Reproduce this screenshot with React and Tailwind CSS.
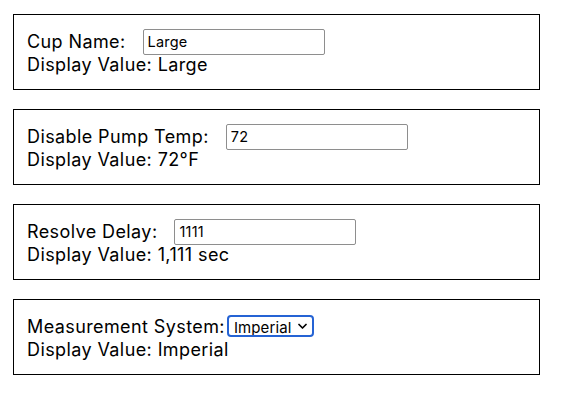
import { useState } from 'react';

function Field({ label, children, display, gap = 'ml-[17px]' }) {
  return (
    <div className="border border-black p-[13px] pr-0">
      <div className="flex items-center h-[26px]">
        <span>{label}</span>
        <div className={gap}>{children}</div>
      </div>
      <div className="leading-[22px]">Display Value: {display}</div>
    </div>
  );
}

export default function App() {
  const [cupName, setCupName] = useState('Large');
  const [temp, setTemp] = useState('72');
  const [delay, setDelay] = useState('1111');
  const [system, setSystem] = useState('Imperial');

  const inputClass =
    'w-[182px] h-[26px] border border-[#8e8e8e] rounded-[2px] px-[4px] text-[14.5px] tracking-[0.2px] text-black outline-none';

  return (
    <div
      className="min-h-[407px] bg-white text-black text-[18px] tracking-[0.4px] pt-[14px] pl-[13px]"
      style={{ fontFamily: 'Inter, "Liberation Sans", Arial, sans-serif' }}
    >
      <div className="w-[527px] flex flex-col gap-[19px]">
        <Field label="Cup Name:" display={cupName}>
          <input className={inputClass} value={cupName} onChange={(e) => setCupName(e.target.value)} />
        </Field>

        <Field label="Disable Pump Temp:" display={`${temp}°F`}>
          <input className={inputClass} value={temp} onChange={(e) => setTemp(e.target.value)} />
        </Field>

        <Field label="Resolve Delay:" display={`${Number(delay).toLocaleString('en-US')} sec`}>
          <input className={inputClass} value={delay} onChange={(e) => setDelay(e.target.value)} />
        </Field>

        <Field label="Measurement System:" display={system} gap="ml-[2px]">
          <div className="relative h-[22px] w-[87px] border-2 border-[#2563d4] rounded-[4px] flex items-center">
            <select
              value={system}
              onChange={(e) => setSystem(e.target.value)}
              className="appearance-none bg-transparent w-full h-full pl-[5px] text-[15px] tracking-[0.1px] text-black outline-none"
            >
              <option>Imperial</option>
              <option>Metric</option>
            </select>
            <svg
              className="absolute right-[5px] top-[6px] pointer-events-none"
              width="9"
              height="7"
              viewBox="0 0 9 7"
              fill="none"
              stroke="black"
              strokeWidth="1.7"
              strokeLinecap="round"
              strokeLinejoin="round"
            >
              <path d="M1 1.5 L4.5 5 L8 1.5" />
            </svg>
          </div>
        </Field>
      </div>
    </div>
  );
}
